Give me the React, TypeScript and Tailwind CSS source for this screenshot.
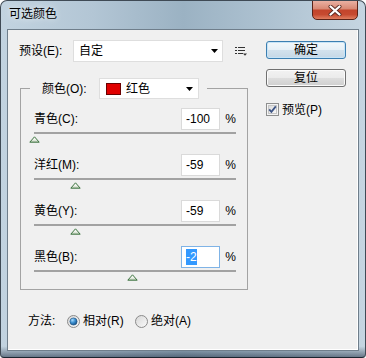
import React from "react";

function Thumb() {
  return (
    <svg width="11" height="7" viewBox="0 0 11 7">
      <defs>
        <linearGradient id="thg" x1="0" y1="0" x2="0" y2="1">
          <stop offset="0" stopColor="#ffffff" />
          <stop offset="0.55" stopColor="#eef2ea" />
          <stop offset="1" stopColor="#b9c9b2" />
        </linearGradient>
      </defs>
      <path d="M5.5 0.8 L10.2 6.2 L0.8 6.2 Z" fill="url(#thg)" stroke="#3d7440" strokeWidth="1" strokeLinejoin="round" />
    </svg>
  );
}

function Arrow() {
  return (
    <svg width="7" height="4" viewBox="0 0 7 4">
      <path d="M0 0 H7 L3.5 4 Z" fill="#000" />
    </svg>
  );
}

function Radio({ checked }: { checked: boolean }) {
  return (
    <svg width="13" height="13" viewBox="0 0 13 13">
      <defs>
        <linearGradient id="rbg" x1="0" y1="0" x2="1" y2="1">
          <stop offset="0" stopColor="#d6d6d6" />
          <stop offset="1" stopColor="#fbfbfb" />
        </linearGradient>
        <radialGradient id="rdot" cx="0.35" cy="0.3" r="0.75">
          <stop offset="0" stopColor="#a8dcff" />
          <stop offset="0.5" stopColor="#3b8fd0" />
          <stop offset="1" stopColor="#144f86" />
        </radialGradient>
      </defs>
      <circle cx="6.5" cy="6.5" r="6" fill="url(#rbg)" stroke="#8a8a8a" strokeWidth="1" />
      {checked && <circle cx="6.5" cy="6.5" r="3.6" fill="url(#rdot)" stroke="#1d4f7e" strokeWidth="0.6" />}
    </svg>
  );
}

function Checkbox() {
  return (
    <svg width="13" height="13" viewBox="0 0 13 13">
      <defs>
        <linearGradient id="cbg" x1="0" y1="0" x2="1" y2="1">
          <stop offset="0" stopColor="#d9d9d9" />
          <stop offset="1" stopColor="#fafafa" />
        </linearGradient>
      </defs>
      <rect x="0.5" y="0.5" width="12" height="12" fill="#f4f4f4" stroke="#8e8f8f" />
      <rect x="2.5" y="2.5" width="8" height="8" fill="url(#cbg)" stroke="#c6c6c6" />
      <path d="M3.2 6.4 L5.4 8.8 L9.8 3.4" fill="none" stroke="#3e5586" strokeWidth="1.8" />
    </svg>
  );
}

function MenuIcon() {
  return (
    <svg width="12" height="10" viewBox="0 0 12 10">
      <rect x="0" y="1" width="2" height="1" fill="#333" />
      <rect x="3" y="1" width="7" height="1" fill="#333" />
      <rect x="0" y="4" width="2" height="1" fill="#333" />
      <rect x="3" y="4" width="7" height="1" fill="#333" />
      <rect x="0" y="7" width="2" height="1" fill="#333" />
      <rect x="3" y="7" width="5" height="1" fill="#333" />
      <path d="M8 7.5 H12 L10 9.8 Z" fill="#333" />
    </svg>
  );
}

function CloseX() {
  return (
    <svg width="14" height="11" viewBox="0 0 14 11">
      <path d="M2.5 1.5 L11.5 9.5 M11.5 1.5 L2.5 9.5" stroke="#5a2a22" strokeWidth="4" strokeLinecap="round" />
      <path d="M2.5 1.5 L11.5 9.5 M11.5 1.5 L2.5 9.5" stroke="#ffffff" strokeWidth="2.3" strokeLinecap="round" />
    </svg>
  );
}

type Row = { label: string; value: number; focused?: boolean };

function SliderRow({ row }: { row: Row }) {
  const center = ((row.value + 100) / 200) * 200 + 0.5;
  return (
    <div className="flex flex-col">
      <div className="flex h-[22px] items-center">
        <span className="flex-1">{row.label}</span>
        {row.focused ? (
          <div className="flex h-[22px] w-[39px] items-center border border-[#7fb3e6] bg-white pl-[4px]">
            <span className="bg-[#3399ff] leading-[16px] text-white">{row.value}</span>
          </div>
        ) : (
          <div className="flex h-[22px] w-[39px] items-center border border-[#dadada] bg-white pl-[4px]">
            {row.value}
          </div>
        )}
        <span className="w-[16px] text-right">%</span>
      </div>
      <div className="mt-[2px] h-[2px] bg-[#a2a2a2]" />
      <div className="relative mt-[2px] h-[7px]">
        <div className="absolute top-0 flex" style={{ left: `${center - 5.5}px` }}>
          <Thumb />
        </div>
      </div>
    </div>
  );
}

export default function App() {
  const rows: Row[] = [
    { label: "青色(C):", value: -100 },
    { label: "洋红(M):", value: -59 },
    { label: "黄色(Y):", value: -59 },
    { label: "黑色(B):", value: -2, focused: true },
  ];

  return (
    <div className="font-['Liberation_Sans','Noto_Sans_CJK_SC',sans-serif] text-[12px] leading-[16px] text-black">
      <div className="flex h-[358px] w-[366px] flex-col overflow-hidden rounded-t-[7px] rounded-b-[4px] border border-[#3f4a55] border-b-[#1c2530] bg-[linear-gradient(180deg,rgba(0,0,0,0)_0%,rgba(0,0,0,0)_97%,rgba(30,45,65,0.55)_100%),linear-gradient(90deg,#c2d3e0_0%,#b3c6d5_25%,#9bb2c3_50%,#afc3d2_75%,#c5d5e1_100%)] px-[6px] pb-[6px]">
        {/* Title bar */}
        <div className="flex h-[28px] items-start justify-between">
          <span className="mt-[5px] pl-[2px] [text-shadow:0_0_6px_rgba(255,255,255,0.9)]">可选颜色</span>
          <div className="-mt-px mr-[1px] flex h-[20px] w-[46px] items-center justify-center rounded-b-[5px] border border-[#5a2318] bg-[linear-gradient(180deg,#eab0a2_0%,#d98a76_42%,#c3452c_52%,#c64a30_75%,#e07e60_100%)]">
            <CloseX />
          </div>
        </div>

        {/* Client area */}
        <div className="flex flex-1 border border-[#6f7e8b] bg-[#f0f0f0] shadow-[inset_-1px_-1px_0_#ffffff]">
          {/* Left column */}
          <div className="flex w-[240px] flex-col pl-[11px] pt-[10px]">
            <div className="flex h-[22px] items-center">
              <span className="w-[54px]">预设(E):</span>
              <div className="flex h-[22px] w-[150px] items-center justify-between border border-[#dedede] bg-white pl-[5px] pr-[4px]">
                <span>自定</span>
                <Arrow />
              </div>
              <div className="ml-[12px] flex">
                <MenuIcon />
              </div>
            </div>

            <fieldset className="ml-[1px] mt-[16px] w-[228px] border border-[#a3a3a3] p-0">
              <legend className="ml-[9px] flex h-[21px] items-center pl-[12px] pr-[8px]">
                <span className="w-[57px]">颜色(O):</span>
                <div className="flex h-[21px] w-[100px] items-center border border-[#dedede] bg-white pl-[6px] pr-[5px]">
                  <div className="h-[12px] w-[15px] border border-[#6a0000] bg-[#e00000]" />
                  <span className="ml-[5px] flex-1">红色</span>
                  <Arrow />
                </div>
              </legend>
              <div className="flex flex-col gap-[11px] pb-[8px] pl-[13px] pr-[11px] pt-[9px]">
                {rows.map((r) => (
                  <SliderRow key={r.label} row={r} />
                ))}
              </div>
            </fieldset>

            <div className="ml-[9px] mt-[23px] flex h-[16px] items-center">
              <span className="w-[39px]">方法:</span>
              <div className="flex w-[68px] items-center">
                <Radio checked />
                <span className="ml-[3px]">相对(R)</span>
              </div>
              <div className="flex items-center">
                <Radio checked={false} />
                <span className="ml-[3px]">绝对(A)</span>
              </div>
            </div>
          </div>

          {/* Right column */}
          <div className="ml-[18px] flex w-[80px] flex-col pt-[11px]">
            <div className="flex h-[18px] items-center justify-center rounded-[3px] border border-[#3c7fb1] bg-[linear-gradient(180deg,#f3f8fb_0%,#e6f0f7_48%,#d3e2ed_52%,#c6d8e6_100%)] shadow-[inset_0_0_0_1px_#c7e4f7]">
              确定
            </div>
            <div className="mt-[10px] flex h-[18px] items-center justify-center rounded-[3px] border border-[#707070] bg-[linear-gradient(180deg,#f2f2f2_0%,#ebebeb_48%,#dddddd_52%,#cfcfcf_100%)] shadow-[inset_0_0_0_1px_#fbfbfb]">
              复位
            </div>
            <div className="mt-[16px] flex h-[13px] items-center">
              <Checkbox />
              <span className="ml-[3px]">预览(P)</span>
            </div>
          </div>
        </div>
      </div>
    </div>
  );
}
